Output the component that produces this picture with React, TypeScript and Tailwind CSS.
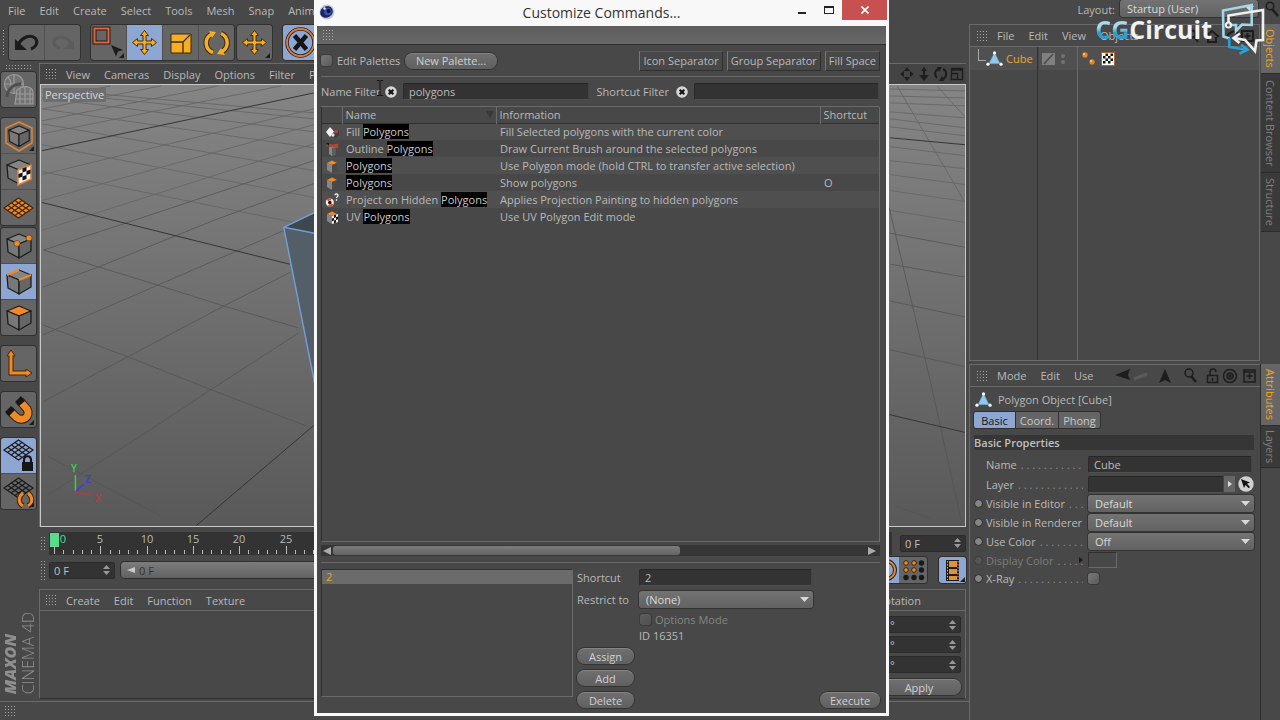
import React from "react";

type Kids = { children?: React.ReactNode; className?: string };

const dots =
  "bg-[radial-gradient(circle,#a8a8a8_0.8px,transparent_1px)] bg-[size:3px_3px]";

function Grip({ className = "w-3 h-3" }: { className?: string }) {
  return <span aria-hidden="true" className={`${dots} shrink-0 ${className}`} />;
}

function MenuItem({ children }: Kids) {
  return (
    <button type="button" className="whitespace-nowrap text-[#b9b9b9]">
      {children}
    </button>
  );
}

function ToolButton({
  label,
  active,
  children,
}: {
  label: string;
  active?: boolean;
  children?: React.ReactNode;
}) {
  return (
    <button
      type="button"
      aria-label={label}
      className={`size-[35px] shrink-0 ${active ? "bg-[#8ea6d2]" : "bg-[#656565]"}`}
    >
      <svg viewBox="0 0 35 35" className="size-full" fill="none">
        {children}
      </svg>
    </button>
  );
}

function ToolGroup({ children, vertical }: { children: React.ReactNode; vertical?: boolean }) {
  return (
    <div
      className={`flex shrink-0 overflow-hidden rounded-[3px] bg-[#505050] ring-1 ring-[#303030] gap-px ${
        vertical ? "flex-col" : ""
      }`}
    >
      {children}
    </div>
  );
}

const Corner = () => <path d="M33 28v5h-5z" fill="#1c1c1c" />;

const MoveShape = () => (
  <path
    d="M17.500 5.500l4 5h-2.500v5.500h5.500v-2.500l5 4-5 4v-2.500H19v5.500h2.500l-4 5-4-5H16v-5.500h-5.500v2.500l-5-4 5-4v2.500H16v-5.500h-2.500z"
    fill="#f5ae25"
    stroke="#403010"
    strokeWidth="1"
  />
);

function Cube({ top = "#858585", right = "#666", front = "#787878", edge = "#1d1d1d" }) {
  return (
    <g stroke={edge} strokeWidth="1.300" strokeLinejoin="round">
      <path d="M6 11l12-5 12 5-12 5z" fill={top} />
      <path d="M6 11l12 5v14L7 24z" fill={front} />
      <path d="M30 11l-12 5v14l12-7z" fill={right} />
    </g>
  );
}

function Lattice({ fill = "none", stroke = "#1a1a1a", dy = 0 }) {
  return (
    <g stroke={stroke} strokeWidth="1.200" transform={`translate(0 ${dy})`}>
      <path d="M17.500 2L32 12 17.500 22 3 12z" fill={fill} />
      <path d="M14 4.500L28.500 14.500M10.500 7L25 17M7 9.500L21 19.500M21 4.500L6.500 14.500M24.500 7L10 17M28.500 9.500L14 19.500" />
    </g>
  );
}

function Viewport() {
  return (
    <svg
      viewBox="40 84 925 443"
      preserveAspectRatio="none"
      className="block size-full"
      fill="none"
      role="img"
      aria-label="Perspective viewport"
    >
      <defs>
        <linearGradient id="floor" x1="0" y1="0" x2="0" y2="1">
          <stop offset="0" stopColor="#858585" />
          <stop offset="1" stopColor="#595959" />
        </linearGradient>
      </defs>
      <rect x="40" y="84" width="925" height="443" fill="url(#floor)" />
      <g stroke="#656565" strokeOpacity=".85">
        <path d="M41 88L313 112M41 91L313 118M41 97L313 131M41 108L313 147M41 123L313 170M41 144L313 197M41 171L313 226" />
        <path d="M41 98L110 85M41 108L160 85M41 120L217 85M41 133L280 85M41 174L313 108M41 200L313 124M41 230L313 143" />
        <path d="M890 88L965 90M890 95L965 97M890 102L965 105M890 111L965 117M890 118L965 127M890 126L965 135M890 146L965 155M890 160L965 168M890 174L965 184M890 190L965 201M890 210L965 222" />
        <path d="M897 85L965 202M937 85L965 116" />
      </g>
      <g stroke="#545454" strokeOpacity=".8">
        <path d="M43 250L157 285 223 306 298 328M42 325L127 357 210 390 307 427M47 457L90 480 160 517" />
        <path d="M42 250L133 220 313 160M42 287L97 267 213 220 313 183M42 335L157 285 233 252 313 217M42 402L127 357 223 306 290 272M48 495L147 432 210 390 298 333" />
        <path d="M890 233L965 247M890 264L965 277M890 301L965 317M890 350L965 367M889 207L930 380 962 525M895 507L930 519" />
      </g>
      <g stroke="#353535">
        <path d="M41 150L313 92M41 202L289 264M195 527L313 426M890 137L965 144M889 415L965 433" />
      </g>
      <path d="M283 227L314 213V233z" fill="#3e464e" />
      <path d="M283 227L314 233V384z" fill="#535e68" />
      <path d="M314 212L283 227 314 384M283 227L314 233" stroke="#6f9dd4" strokeWidth="1.500" />
      <path d="M74.500 492V476" stroke="#3ecf4a" strokeWidth="1.500" />
      <path d="M75 492l8-7" stroke="#3c3ce0" strokeWidth="1.500" />
      <path d="M75 493l15 3" stroke="#b53c3c" strokeWidth="1.500" />
      <g fontFamily="Open Sans" fontSize="10" fontWeight="600">
        <text x="70" y="473" fill="#3ecf4a">Y</text>
        <text x="84" y="484" fill="#3c3ce0">Z</text>
        <text x="94" y="503" fill="#b53c3c">X</text>
      </g>
    </svg>
  );
}

function Ruler() {
  const ticks = Array.from({ length: 90 }, (_, i) => i);
  return (
    <svg className="h-[23px] min-w-0 flex-1 bg-[#333]" role="img" aria-label="Timeline ruler">
      <rect x="1" y="1" width="9" height="14" fill="#58dc8c" />
      {ticks.map((i) => {
        const x = Math.round(5 + i * 9.26);
        return (
          <g key={i}>
            <rect x={x} y={i % 5 ? 18 : 14} width="1" height={i % 5 ? 4 : 8} fill="#bdbdbd" />
            {i % 5 === 0 && (
              <text
                x={i === 0 ? 14 : x}
                y="11"
                textAnchor="middle"
                fontSize="11"
                fill={i === 0 ? "#58dc8c" : "#b9b9b9"}
              >
                {i}
              </text>
            )}
          </g>
        );
      })}
    </svg>
  );
}

const Spin = () => (
  <svg viewBox="0 0 7 10" className="h-[10px] w-[7px] shrink-0" fill="#999" aria-hidden="true">
    <path d="M3.500 0L7 4H0zM3.500 10L0 6h7z" />
  </svg>
);

function NumberBox({ label, value, className = "" }: { label: string; value: string; className?: string }) {
  return (
    <label
      className={`flex h-[17px] items-center rounded-[2px] border border-[#2b2b2b] bg-[#333] px-1 ${className}`}
    >
      <span className="sr-only">{label}</span>
      <input defaultValue={value} className="w-full min-w-0 bg-transparent text-[#c0c0c0] outline-none" />
      <Spin />
    </label>
  );
}

function Select({
  id,
  value,
  label,
  className = "",
}: {
  id: string;
  value: string;
  label?: string;
  className?: string;
}) {
  return (
    <div className={`grid items-center ${className}`}>
      <select
        id={id}
        aria-label={label}
        className="col-start-1 row-start-1 h-[17px] w-full appearance-none rounded-[3px] bg-linear-to-b from-[#737373] to-[#626262] px-[7px] text-[#dadada] shadow-[0_0_0_1px_#333] outline-none"
      >
        <option>{value}</option>
      </select>
      <svg
        viewBox="0 0 9 5"
        className="pointer-events-none col-start-1 row-start-1 mr-1 h-[5px] w-[9px] justify-self-end"
        fill="#d8d8d8"
        aria-hidden="true"
      >
        <path d="M0 0h9L4.500 5z" />
      </svg>
    </div>
  );
}

function Check({ id, disabled }: { id: string; disabled?: boolean }) {
  return (
    <input
      id={id}
      type="checkbox"
      disabled={disabled}
      className="size-[11px] shrink-0 appearance-none rounded-[3px] bg-linear-to-br from-[#7a7a7a] to-[#5a5a5a] shadow-[0_0_0_1px_#3a3a3a] disabled:from-[#5e5e5e] disabled:to-[#505050]"
    />
  );
}

function Pill({ children, className = "" }: Kids) {
  return (
    <button
      type="button"
      className={`h-[16px] rounded-full border-t border-[#858585] bg-linear-to-b from-[#6f6f6f] to-[#606060] leading-[14px] text-[#d0d0d0] shadow-[0_0_0_1px_#333] ${className}`}
    >
      {children}
    </button>
  );
}

function Clear({ label }: { label: string }) {
  return (
    <button type="button" aria-label={label} className="size-[12px] shrink-0">
      <svg viewBox="0 0 12 12" className="size-full">
        <circle cx="6" cy="6" r="5.800" fill="#d6d6d6" />
        <path d="M3.700 3.700l4.600 4.600M8.300 3.700L3.700 8.300" stroke="#151515" strokeWidth="2.200" />
      </svg>
    </button>
  );
}

function SideTab({ children, active, className }: Kids & { active?: boolean }) {
  return (
    <button
      type="button"
      className={`flex w-full items-center justify-center border-b border-[#2c2c2c] text-[11px] whitespace-nowrap [writing-mode:vertical-rl] ${
        active ? "bg-[#666] text-[#f0a422]" : "bg-[#3a3a3a] text-[#808080]"
      } ${className}`}
    >
      {children}
    </button>
  );
}

const Tri = () => (
  <svg viewBox="0 0 18 16" className="h-[15px] w-[17px] shrink-0" aria-hidden="true">
    <path d="M9 1.500l6 12H3z" fill="#8fc8ee" stroke="#5f94bb" strokeWidth=".6" />
    <g fill="#fff">
      <circle cx="9" cy="2" r="1.700" />
      <circle cx="2" cy="14" r="1.700" />
      <circle cx="16" cy="14" r="1.700" />
    </g>
  </svg>
);

function RowIcon({ kind }: { kind: string }) {
  return (
    <svg viewBox="0 0 14 14" className="mx-auto size-[14px]" aria-hidden="true">
      {kind === "fill" && (
        <>
          <path d="M7 6l4-2 3 2v4l-4 3-3-2z" fill="#3b3b3b" />
          <circle cx="11" cy="6.500" r="2" fill="#b2472f" />
          <path d="M1 7l4-5 4 4.500L5 12z" fill="#f2f2f2" />
          <circle cx="8" cy="10" r="1.700" fill="#ddd" />
        </>
      )}
      {kind === "outline" && (
        <>
          <path d="M4 5h7v7l-4 2-3-2z" fill="#888" />
          <path d="M7 6v8l4-2V5z" fill="#5c5c5c" />
          <path d="M2 2.500l5 1.500 5-1v3" stroke="#b2472f" strokeWidth="2.400" fill="none" />
          <path d="M1 1h3v3z" fill="#161616" />
        </>
      )}
      {(kind === "poly" || kind === "uv") && (
        <>
          <path d="M2 4l5-2.500L12 4 7 6z" fill="#f08a27" />
          <path d="M2 4l5 2v8l-5-3z" fill="#868686" />
          <path d="M12 4L7 6v8l5-3z" fill="#4a4a4a" />
        </>
      )}
      {kind === "uv" && (
        <>
          <path d="M7 6l6-2v8l-6 2z" fill="#eee" />
          <path d="M9 5.300l2-.6v2.600l-2 .7zM7 8.600l2-.6v2.600l-2 .7zM11 7.300l2-.7v2.700l-2 .7zM9 10.600l2-.6v2.600l-2 .7z" fill="#111" />
        </>
      )}
      {kind === "project" && (
        <>
          <circle cx="4.800" cy="9.500" r="2.900" fill="#161616" stroke="#f1f1f1" strokeWidth="2.200" />
          <path d="M2.500 7.500A3 3 0 0 1 6 6.800M7.500 11a3 3 0 0 1-4 1" stroke="#d0532d" strokeWidth="2.200" fill="none" />
          <path d="M10 2.200c.2-1.800 3.200-1.600 3 .3-.2 1.200-1.500 1.200-1.500 2.500M11.500 6.200v1.500" stroke="#fff" strokeWidth="1.300" fill="none" />
        </>
      )}
    </svg>
  );
}

const commands = [
  { icon: "fill", pre: "Fill ", info: "Fill Selected polygons with the current color", key: "" },
  { icon: "outline", pre: "Outline ", info: "Draw Current Brush around the selected polygons", key: "" },
  { icon: "poly", pre: "", info: "Use Polygon mode (hold CTRL to transfer active selection)", key: "" },
  { icon: "poly", pre: "", info: "Show polygons", key: "O" },
  { icon: "project", pre: "Project on Hidden ", info: "Applies Projection Painting to hidden polygons", key: "" },
  { icon: "uv", pre: "UV ", info: "Use UV Polygon Edit mode", key: "" },
];

const field =
  "h-[17px] min-w-0 rounded-[2px] border border-t-[#262626] border-l-[#2b2b2b] border-r-[#444] border-b-[#505050] bg-[#333] px-[5px] text-[#bcbcbc] outline-none";

function CommandDialog() {
  return (
    <section
      role="dialog"
      aria-labelledby="dialog-title"
      className="absolute top-0 left-[314px] flex h-[716px] w-[575px] flex-col bg-[#f8f8f8] px-[3px] pb-[3px]"
    >
      <header className="-mr-px flex h-[26px] shrink-0 items-start text-[#333]">
        <svg viewBox="0 0 16 16" className="mt-1 ml-[2px] size-[16px]" aria-hidden="true">
          <circle cx="8" cy="8" r="7.500" fill="#c3c7d4" />
          <ellipse cx="7.500" cy="8" rx="6.500" ry="5.600" fill="#1b2560" transform="rotate(-30 7.500 8)" />
          <circle cx="8.800" cy="7.500" r="3.800" fill="#3d4fae" />
          <circle cx="9.500" cy="7" r="2" fill="#0b1030" />
          <circle cx="5.500" cy="4.500" r="1.300" fill="#dfe4f7" />
        </svg>
        <h1 id="dialog-title" className="flex-1 pl-[80px] text-center text-[14px] leading-[26px]">
          Customize Commands...
        </h1>
        <button type="button" aria-label="Minimize" className="flex h-[20px] w-[27px] justify-center pt-3">
          <span className="h-[2px] w-2 bg-[#222]" />
        </button>
        <button type="button" aria-label="Maximize" className="flex h-[20px] w-[27px] justify-center pt-[6px]">
          <span className="h-[8px] w-[10px] border border-t-2 border-[#222]" />
        </button>
        <button type="button" aria-label="Close" className="flex h-[20px] w-[45px] items-center justify-center bg-[#c75050]">
          <svg viewBox="0 0 8 8" className="size-2" stroke="#fff" strokeWidth="1.600">
            <path d="M.5.500l7 7M7.500.500l-7 7" />
          </svg>
        </button>
      </header>

      <div className="flex min-h-0 flex-1 flex-col bg-[#484848] text-[#b9b9b9]">
        <div className="flex h-[19px] shrink-0 items-center border-b border-[#2e2e2e] bg-linear-to-b from-[#5c5c5c] to-[#686868] pl-[5px]">
          <Grip />
        </div>

        <div className="mr-[6px] ml-1 flex h-[32px] shrink-0 items-center border-b border-[#6a6a6a]">
          <Check id="edit-palettes" />
          <label htmlFor="edit-palettes" className="ml-[5px] w-[64px] whitespace-nowrap">
            Edit Palettes
          </label>
          <Pill className="ml-1 w-[92px]">New Palette...</Pill>
          <div className="ml-auto flex gap-1">
            {["Icon Separator", "Group Separator", "Fill Space"].map((t) => (
              <button
                key={t}
                type="button"
                className="h-5 border border-t-[#5e5e5e] border-r-[#303030] border-b-[#303030] border-l-[#777] px-[3px] leading-[18px] whitespace-nowrap"
              >
                {t}
              </button>
            ))}
          </div>
        </div>

        <div className="mr-[7px] ml-1 flex h-[30px] shrink-0 items-center border-b border-[#6a6a6a]">
          <label htmlFor="name-filter" className="w-[64px] whitespace-nowrap">
            Name Filter
          </label>
          <Clear label="Clear name filter" />
          <input id="name-filter" defaultValue="polygons" className={`${field} ml-[6px] flex-1`} />
          <label htmlFor="shortcut-filter" className="ml-2 w-[79px] whitespace-nowrap">
            Shortcut Filter
          </label>
          <Clear label="Clear shortcut filter" />
          <input id="shortcut-filter" className={`${field} ml-[6px] flex-1`} />
        </div>

        <div className="mr-[6px] ml-1 min-h-0 flex-1 border-r border-b border-l border-r-[#6a6a6a] border-b-[#6a6a6a] border-l-[#303030]">
          <table className="w-full table-fixed border-collapse text-left">
            <colgroup>
              <col className="w-[20px]" />
              <col className="w-[154px]" />
              <col />
              <col className="w-[59px]" />
            </colgroup>
            <thead>
              <tr className="h-[16px] border-b border-[#303030]">
                <th aria-label="Icon" className="p-0" />
                <th className="border-l border-[#6a6a6a] p-0 pl-[3px] font-normal">
                  <span className="flex items-center justify-between">
                    Name
                    <svg viewBox="0 0 8 7" className="mr-[2px] h-[7px] w-2" fill="#383838" aria-hidden="true">
                      <path d="M0 0h8L4 7z" />
                    </svg>
                  </span>
                </th>
                <th className="border-l border-[#6a6a6a] p-0 pl-[3px] font-normal">Information</th>
                <th className="border-l border-[#6a6a6a] p-0 pl-[3px] font-normal">Shortcut</th>
              </tr>
            </thead>
            <tbody>
              {commands.map((c, i) => (
                <tr key={i} className="h-[17px] odd:bg-[#4f4f4f]">
                  <td className="p-0">
                    <RowIcon kind={c.icon} />
                  </td>
                  <td className="p-0 pl-1 whitespace-nowrap">
                    {c.pre}
                    <mark className="bg-black text-[#c8c8c8]">Polygons</mark>
                  </td>
                  <td className="p-0 pl-1 whitespace-nowrap">{c.info}</td>
                  <td className="p-0 pl-1">{c.key}</td>
                </tr>
              ))}
            </tbody>
          </table>
        </div>

        <div className="mr-[6px] ml-1 flex h-[21px] shrink-0 items-start border-b border-[#6a6a6a] pt-[3px]">
          <div className="flex h-[11px] w-full items-center bg-[#363636]">
            <svg viewBox="0 0 8 8" className="mx-[2px] size-2" fill="#aaa" aria-hidden="true">
              <path d="M8 0v8L0 4z" />
            </svg>
            <div className="h-[9px] w-[62%] rounded-[3px] bg-linear-to-b from-[#7c7c7c] to-[#646464]" />
            <svg viewBox="0 0 8 8" className="mr-1 ml-auto size-2" fill="#aaa" aria-hidden="true">
              <path d="M0 0v8l8-4z" />
            </svg>
          </div>
        </div>

        <div className="mr-[6px] mb-3 ml-1 flex h-[138px] shrink-0 pt-[6px]">
          <ul className="mb-1 w-[252px] border border-t-[#303030] border-r-[#6a6a6a] border-b-[#6a6a6a] border-l-[#303030]">
            <li className="h-[14px] bg-[#6b6b6b] px-1 leading-[13px] text-[#f0a422]">2</li>
          </ul>
          <div className="ml-1 flex flex-1 flex-col">
            <div className="flex h-[17px] items-center">
              <label htmlFor="shortcut" className="w-[62px]">
                Shortcut
              </label>
              <input id="shortcut" defaultValue="2" className={`${field} w-[173px]`} />
            </div>
            <div className="mt-[5px] flex h-[17px] items-center">
              <label htmlFor="restrict" className="w-[62px] whitespace-nowrap">
                Restrict to
              </label>
              <Select id="restrict" value="(None)" className="w-[174px]" />
            </div>
            <div className="mt-1 ml-[63px] flex h-[16px] items-center gap-1 text-[#858585]">
              <Check id="options-mode" disabled />
              <label htmlFor="options-mode">Options Mode</label>
            </div>
            <p className="ml-[62px] leading-[18px]">ID 16351</p>
            <div className="mt-[3px] flex items-end justify-between">
              <div className="flex flex-col gap-[6px]">
                <Pill className="w-[57px]">Assign</Pill>
                <Pill className="w-[57px]">Add</Pill>
                <Pill className="w-[57px]">Delete</Pill>
              </div>
              <Pill className="w-[60px]">Execute</Pill>
            </div>
          </div>
        </div>
      </div>

      <svg viewBox="0 0 8 16" className="pointer-events-none absolute top-[80px] left-[62px] h-[16px] w-2" stroke="#111" fill="none" aria-hidden="true">
        <path d="M1 .5h2.500M4.500.500H7M4 1v14M1 15.500h2.500M4.500 15.500H7" />
      </svg>
    </section>
  );
}

function TopTools() {
  return (
    <div className="flex h-[40px] shrink-0 items-center pl-[2px]">
      <Grip className="mr-[3px] h-[27px] w-[4px]" />
      <ToolGroup>
        <ToolButton label="Undo">
          <path d="M9 20c4-8 12-11 17-7 4 4 1 9-4 11" stroke="#1b1b1b" strokeWidth="3" />
          <path d="M6 14v11h12z" fill="#1b1b1b" />
        </ToolButton>
        <ToolButton label="Redo">
          <path d="M27 20c-4-8-12-10-17-6-3 4 0 8 5 9" stroke="#5c5c5c" strokeWidth="3" />
          <path d="M29 15v9H19z" fill="#5c5c5c" />
        </ToolButton>
      </ToolGroup>
      <span className="w-[11px] shrink-0" />
      <ToolGroup>
        <ToolButton label="Select">
          <path d="M3.500 3.500h14v14h-14z" stroke="#2e1712" strokeWidth="4" />
          <path d="M3.500 3.500h14v14h-14z" stroke="#dc6743" strokeWidth="2" />
          <path d="M20 20l12 5-5 1.500-2 5z" fill="#1c1c1c" />
          <Corner />
        </ToolButton>
        <ToolButton label="Move" active>
          <MoveShape />
        </ToolButton>
        <ToolButton label="Scale">
          <path d="M8 9h20v19H8z" fill="#f5ae25" stroke="#3a2c10" />
          <path d="M8 17h12v11M20 17l7-7" stroke="#3a2c10" strokeWidth="1.300" />
        </ToolButton>
        <ToolButton label="Rotate">
          <path d="M14 27.500A10 10 0 0 1 12 9.500M22 8.500a10 10 0 0 1 1 18" stroke="#3a2c10" strokeWidth="5.500" />
          <path d="M14 27.500A10 10 0 0 1 12 9.500M22 8.500a10 10 0 0 1 1 18" stroke="#f5ae25" strokeWidth="3.500" />
          <path d="M10 6l7 1-4 6zM26 30l-8-1 4-6z" fill="#f5ae25" />
        </ToolButton>
      </ToolGroup>
      <span className="w-[3px] shrink-0" />
      <ToolGroup>
        <ToolButton label="Last tool">
          <MoveShape />
          <Corner />
        </ToolButton>
      </ToolGroup>
      <span className="w-[11px] shrink-0" />
      <ToolGroup>
        <ToolButton label="X axis" active>
          <circle cx="17.500" cy="17.500" r="13.500" stroke="#262626" strokeWidth="3.500" />
          <circle cx="17.500" cy="17.500" r="13.500" stroke="#df7b3a" strokeWidth="1.800" />
          <path d="M11.500 10.500l12 14M23.500 10.500l-12 14" stroke="#161616" strokeWidth="4.500" />
        </ToolButton>
      </ToolGroup>
    </div>
  );
}

function LeftTools() {
  return (
    <aside className="flex w-[39px] shrink-0 flex-col pr-[3px] pl-px">
      <Grip className="mt-[1px] ml-1 h-[6px] w-[27px]" />
      <div className="mt-[2px] flex flex-col gap-[11px]">
        <ToolGroup vertical>
          <ToolButton label="Make editable">
            <g stroke="#9b9b9b" strokeWidth="1.200" fill="#737373">
              <circle cx="13" cy="12" r="9.500" />
              <path d="M4 12h18M13 3v18M7 5c4 4 4 10 0 14" />
              <path d="M16 18c8-6 15-3 16 2v12H14z" />
              <path d="M19 17v15M24 15v17M29 17v15M15 22h17M15 27h17" />
            </g>
            <path d="M6 25c1-9 7-13 14-13" stroke="#4f4f4f" strokeWidth="3" />
          </ToolButton>
        </ToolGroup>
        <div className="flex flex-col gap-[3px]">
          <ToolGroup vertical>
            <ToolButton label="Model mode">
              <path d="M18 4l13 6v15l-13 8L5 25V10z" stroke="#e88331" strokeWidth="1.500" />
              <g transform="translate(2.700 3) scale(.85)">
                <Cube />
              </g>
              <Corner />
            </ToolButton>
            <ToolButton label="Texture mode">
              <Cube />
              <path d="M17 16l13-5v14l-13 6z" fill="#f2f2f2" stroke="#e88331" strokeWidth="1.600" />
              <path d="M21.500 14.500l4-1.500v4l-4 1.500zM17.500 20l4-1.500v4l-4 1.500zM25.500 17l4-1.500v4l-4 1.500zM21.500 22.500l4-1.500v4l-4 1.500z" fill="#111" />
            </ToolButton>
            <ToolButton label="Workplane">
              <Lattice fill="#ee8a28" stroke="#402409" dy={6} />
            </ToolButton>
          </ToolGroup>
          <ToolGroup vertical>
            <ToolButton label="Points mode">
              <Cube />
              <circle cx="16" cy="15.500" r="3" fill="#f08a27" stroke="#5a3410" strokeWidth=".6" />
              <circle cx="28" cy="10" r="3" fill="#f08a27" stroke="#5a3410" strokeWidth=".6" />
            </ToolButton>
            <ToolButton label="Edges mode" active>
              <Cube />
              <path d="M6 11l12-5M18 16l12-5" stroke="#f08a27" strokeWidth="2.200" />
            </ToolButton>
            <ToolButton label="Polygons mode">
              <Cube top="#f08a27" />
            </ToolButton>
          </ToolGroup>
        </div>
        <ToolGroup vertical>
          <ToolButton label="Axis">
            <path d="M10 9v18h17" stroke="#442708" strokeWidth="5" />
            <path d="M10 4l4 6H6zM31 27l-6 4v-8z" fill="#f08a27" stroke="#442708" />
            <path d="M10 9v18h17" stroke="#f08a27" strokeWidth="3" />
          </ToolButton>
        </ToolGroup>
        <ToolGroup vertical>
          <ToolButton label="Snap">
            <path d="M8 18l7 7c7 6 15-1 11-8l-7-8" stroke="#352009" strokeWidth="9" />
            <path d="M8 18l7 7c7 6 15-1 11-8l-7-8" stroke="#f08a27" strokeWidth="7" />
            <path d="M4 20l6-6 4 4-6 6zM14 10l6-6 4 5-6 5z" fill="#161616" />
            <Corner />
          </ToolButton>
        </ToolGroup>
        <ToolGroup vertical>
          <ToolButton label="Lock workplane" active>
            <Lattice />
            <path d="M23 25v-3c0-5 7-5 7 0v3" stroke="#151515" strokeWidth="2.200" />
            <path d="M21 24h11v9H21z" fill="#151515" />
          </ToolButton>
          <ToolButton label="Planar workplane">
            <Lattice dy={2} />
            <path d="M22 19c-5 4-5 10 0 13M27 19c5 4 5 10 0 13" stroke="#3b220a" strokeWidth="5" />
            <path d="M22 19c-5 4-5 10 0 13M27 19c5 4 5 10 0 13" stroke="#f08a27" strokeWidth="3" />
            <Corner />
          </ToolButton>
        </ToolGroup>
      </div>
      <div className="mt-auto mb-[5px] flex rotate-180 flex-col self-center text-[#8f8f8f] [writing-mode:vertical-rl]">
        <b className="text-[16px] leading-[18px] font-extrabold italic">MAXON</b>
        <span className="text-[16px] leading-[18px] font-light whitespace-nowrap">CINEMA 4D</span>
      </div>
    </aside>
  );
}

function Workspace() {
  return (
    <div className="flex min-w-0 flex-1 flex-col pr-[3px]">
      <div className="flex min-h-0 flex-1 flex-col border-t border-l border-[#6a6a6a]">
        <div className="flex h-[20px] shrink-0 items-center bg-[#444] pr-[2px] pl-[5px]">
          <Grip />
          <nav className="ml-[9px] flex gap-[14px]">
            {["View", "Cameras", "Display", "Options", "Filter", "Panel"].map((t) => (
              <MenuItem key={t}>{t}</MenuItem>
            ))}
          </nav>
          <svg viewBox="0 0 64 14" className="ml-auto h-[14px] w-[64px]" fill="#1e1e1e" aria-hidden="true">
            <path d="M7 0l3 4H4zM7 14l3-4H4zM0 7l4-3v6zM14 7l-4-3v6z" />
            <path d="M24 0l3 4h-2v4h4l-5 6-5-6h4V4h-2z" />
            <path d="M38 2a5.500 5.500 0 0 0-1 9M43 2a5.500 5.500 0 0 1 0 10" stroke="#1e1e1e" strokeWidth="2" fill="none" />
            <path d="M37 0h5l-3 5zM44 14h-5l3-5z" />
            <path d="M51.500 1.500h11v11h-11zM51.500 6.500h6v6M51.500 3h11" stroke="#1e1e1e" strokeWidth="1.300" fill="none" />
          </svg>
        </div>
        <div className="relative min-h-0 flex-1 border border-[#c8c8c8]">
          <Viewport />
          <span className="absolute top-[3px] left-[2px] bg-[#6e6e6e] px-[2px] leading-[14px] text-[#d6d6d6]">
            Perspective
          </span>
        </div>
      </div>

      <div className="flex h-[32px] shrink-0 items-center pl-px">
        <Grip className="mr-[4px] h-[15px] w-[5px]" />
        <Ruler />
        <NumberBox label="Current frame" value="0 F" className="ml-2 w-[66px]" />
      </div>

      <div className="flex h-[22px] shrink-0 items-center pl-px">
        <Grip className="mr-[4px] h-[21px] w-[5px]" />
        <NumberBox label="Start frame" value="0 F" className="w-[66px]" />
        <div className="ml-[6px] flex h-[16px] w-[700px] items-center gap-1 rounded-[4px] bg-linear-to-b from-[#7c7c7c] to-[#626262] pl-[6px] text-[#333] ring-1 ring-[#2e2e2e]">
          <svg viewBox="0 0 8 6" className="h-[6px] w-2" fill="#c8c8c8" aria-hidden="true">
            <path d="M8 0v6L0 3z" />
          </svg>
          0 F
        </div>
        <div className="ml-auto flex gap-3">
          <div className="flex h-[26px] overflow-hidden rounded-[3px] ring-1 ring-[#303030]">
            <button type="button" aria-label="Record parameter" className="w-[26px] bg-[#8ea6d2]">
              <svg viewBox="0 0 26 26" className="size-full" fill="none">
                <circle cx="13" cy="13" r="9" stroke="#262626" strokeWidth="4" />
                <circle cx="13" cy="13" r="9" stroke="#df8b3a" strokeWidth="2" />
              </svg>
            </button>
            <button type="button" aria-label="Record points" className="w-[28px] bg-[#656565]">
              <svg viewBox="0 0 28 26" className="size-full" fill="#191919">
                <g fill="#f08a27" stroke="#3b220a">
                  <circle cx="7" cy="6" r="2.300" />
                  <circle cx="15" cy="6" r="2.300" />
                  <circle cx="7" cy="13" r="2.300" />
                  <circle cx="15" cy="13" r="2.300" />
                </g>
                <circle cx="22.500" cy="6" r="2.700" />
                <circle cx="22.500" cy="13" r="2.700" />
                <circle cx="7" cy="20.500" r="2.700" />
                <circle cx="15" cy="20.500" r="2.700" />
                <circle cx="22.500" cy="20.500" r="2.700" />
              </svg>
            </button>
          </div>
          <button type="button" aria-label="Film" className="h-[26px] w-[27px] rounded-[3px] bg-[#8ea6d2] ring-1 ring-[#303030]">
            <svg viewBox="0 0 27 26" className="size-full">
              <path d="M7 3h13v21H7z" fill="#1b1b1b" />
              <path d="M10 4h8v6h-8zM10 12h8v5h-8zM10 19h8v4h-8z" fill="#e0913c" />
              <path d="M8.500 4v19M19 4v19" stroke="#b9b9b9" strokeDasharray="1.500 1.500" />
              <path d="M26 20v5h-5z" fill="#1c1c1c" />
            </svg>
          </button>
        </div>
      </div>

      <div className="mt-[8px] flex h-[110px] shrink-0 gap-1">
        <div className="flex min-w-0 flex-1 flex-col border-t border-b border-l border-t-[#6a6a6a] border-b-[#2e2e2e] border-l-[#6a6a6a]">
          <div className="flex h-[21px] items-center border-b border-[#6a6a6a] pl-[5px]">
            <Grip />
            <nav className="ml-[9px] flex gap-[14px]">
              {["Create", "Edit", "Function", "Texture"].map((t) => (
                <MenuItem key={t}>{t}</MenuItem>
              ))}
            </nav>
          </div>
        </div>
        <div className="flex w-[180px] flex-col border-t border-r border-b border-[#6a6a6a] border-b-[#2e2e2e]">
          <div className="flex h-[21px] items-center justify-end border-b border-[#6a6a6a] pr-[44px]">Rotation</div>
          <div className="mt-[5px] flex flex-col items-end gap-[3px] pr-1">
            {["H", "P", "B"].map((a) => (
              <NumberBox key={a} label={`Rotation ${a}`} value="°" className="w-[76px]" />
            ))}
            <Pill className="mt-[3px] w-[84px]">Apply</Pill>
          </div>
        </div>
      </div>
    </div>
  );
}

function ObjectsPanel() {
  return (
    <div className="flex h-[337px] shrink-0">
      <div className="flex min-w-0 flex-1 flex-col border border-[#6a6a6a]">
        <div className="flex h-[22px] shrink-0 items-center border-b border-[#6a6a6a] pr-1 pl-[6px]">
          <Grip />
          <nav className="ml-[9px] flex gap-[14px]">
            {["File", "Edit", "View", "Objects"].map((t) => (
              <MenuItem key={t}>{t}</MenuItem>
            ))}
          </nav>
          <svg viewBox="0 0 68 14" className="ml-auto h-[14px] w-[68px]" fill="none" stroke="#1d1d1d" strokeWidth="2" aria-hidden="true">
            <circle cx="5" cy="5" r="3.500" />
            <path d="M7 8l4 5M18 8l7-6 7 6M21 8v5h8V8M40 7c5-6 9-6 13 0M55 2h11v10H55zM60.500 4v6M57.500 7h6" />
          </svg>
        </div>
        <div className="flex min-h-0 flex-1">
          <div className="w-[68px] shrink-0 border-r border-[#303030]">
            <div className="flex h-[23px] items-center bg-[#505050] pl-2 text-[#f0a422]">
              <span className="mb-[8px] h-3 w-2 shrink-0 border-b border-l border-[#a8a8a8]" />
              <Tri />
              <span className="ml-[3px]">Cube</span>
            </div>
          </div>
          <div className="w-px shrink-0" />
          <div className="w-[39px] shrink-0 border-r border-[#6a6a6a]">
            <div className="flex h-[23px] items-center bg-[#505050] pl-[3px]">
              <svg viewBox="0 0 26 14" className="h-[14px] w-[26px]" aria-hidden="true">
                <rect x="0" y="1" width="13" height="12" fill="#808080" />
                <path d="M2 12L11 2" stroke="#4a4a4a" strokeWidth="1.500" />
                <circle cx="21" cy="4" r="2" fill="#727272" />
                <circle cx="21" cy="10" r="2" fill="#727272" />
              </svg>
            </div>
          </div>
          <div className="flex-1">
            <div className="flex h-[23px] items-center gap-[5px] bg-[#505050] pl-[3px]">
              <svg viewBox="0 0 15 15" className="size-[15px]" aria-hidden="true">
                <g fill="#d58a3e" stroke="#5d3a15" strokeWidth=".7">
                  <circle cx="4" cy="4" r="3.200" />
                  <circle cx="11" cy="11" r="3.200" />
                </g>
                <circle cx="3" cy="3" r="1" fill="#f5cf98" />
                <circle cx="10" cy="10" r="1" fill="#f5cf98" />
              </svg>
              <svg viewBox="0 0 14 14" className="size-[14px]" aria-hidden="true">
                <rect x=".5" y=".5" width="13" height="13" fill="#fff" stroke="#b7652c" />
                <path d="M4.500 1.500h2.500v2.500H4.500zM9.500 1.500h2.500v2.500H9.500zM2 4h2.500v2.500H2zM7 4h2.500v2.500H7zM4.500 6.500h2.500V9H4.500zM9.500 6.500h2.500V9H9.500zM2 9h2.500v2.500H2zM7 9h2.500v2.500H7z" fill="#111" />
              </svg>
            </div>
          </div>
        </div>
      </div>
      <div className="flex w-[20px] shrink-0 flex-col pl-px">
        <SideTab active className="h-[50px]">Objects</SideTab>
        <SideTab className="h-[99px]">Content Browser</SideTab>
        <SideTab className="h-[59px]">Structure</SideTab>
      </div>
    </div>
  );
}

function AttrRow({
  label,
  id,
  dot = true,
  dim,
  leader = true,
  height = "h-[19px]",
  children,
}: {
  label: string;
  id: string;
  dot?: boolean;
  dim?: boolean;
  leader?: boolean;
  height?: string;
  children: React.ReactNode;
}) {
  return (
    <div className={`flex items-center ${height} ${dim ? "text-[#7c7c7c]" : ""}`}>
      <span
        className={`mr-[3px] size-[9px] shrink-0 rounded-full ${
          dot ? (dim ? "border border-[#3a3a3a] bg-[#555]" : "border border-[#2a2a2a] bg-[#858585]") : ""
        }`}
      />
      <span className="mr-[5px] flex w-[97px] shrink-0 overflow-hidden whitespace-nowrap">
        <label htmlFor={id}>{label}</label>
        {leader && (
          <span aria-hidden="true" className="ml-1 flex-1 overflow-hidden text-[#8c8c8c]">
            . . . . . . . . . . . . . . . .
          </span>
        )}
      </span>
      {children}
    </div>
  );
}

function AttributesPanel() {
  return (
    <div className="mt-[3px] flex min-h-0 flex-1">
      <div className="flex min-w-0 flex-1 flex-col border-t border-l border-[#6a6a6a]">
        <div className="flex h-[22px] shrink-0 items-center border-b border-[#6a6a6a] pr-1 pl-[6px]">
          <Grip />
          <nav className="ml-[9px] flex gap-[14px]">
            {["Mode", "Edit", "Use"].map((t) => (
              <MenuItem key={t}>{t}</MenuItem>
            ))}
          </nav>
          <svg viewBox="0 0 142 16" className="ml-auto h-[16px] w-[142px]" fill="none" stroke="#1d1d1d" strokeWidth="1.500" aria-hidden="true">
            <path d="M1 7l15-6-2 6 2 5z" fill="#1d1d1d" stroke="none" />
            <path d="M20 11l13-5" stroke="#5a5a5a" strokeWidth="3" />
            <path d="M51 1l6 14-6-3-6 3z" fill="#1d1d1d" stroke="none" />
            <circle cx="75" cy="5" r="4" />
            <path d="M77 8l5 6" strokeWidth="2.500" />
            <path d="M93.500 7.500h10v7h-10zM96 7V4c0-4 6-4 6 0M98.500 10v3" />
            <circle cx="116" cy="8" r="6.500" />
            <circle cx="116" cy="8" r="3" />
            <circle cx="116" cy="8" r="1" />
            <path d="M130 2h11v12h-11zM135.500 5v6M132.500 8h6M130 4h11" />
          </svg>
        </div>
        <div className="flex flex-col pr-[6px] pl-1">
          <div className="mt-[2px] flex h-[20px] items-center gap-[6px] pl-px">
            <Tri />
            Polygon Object [Cube]
          </div>
          <div className="mt-[3px] flex h-[16px] gap-px text-[#c8c8c8]">
            <button type="button" className="w-[41px] rounded-l-[2px] bg-[#8ea6d2] text-[#151515] ring-1 ring-[#303030]">
              Basic
            </button>
            <button type="button" className="w-[42px] bg-[#656565] ring-1 ring-[#303030]">
              Coord.
            </button>
            <button type="button" className="w-[41px] rounded-r-[2px] bg-[#656565] ring-1 ring-[#303030]">
              Phong
            </button>
          </div>
          <h2 className="mt-[7px] h-[15px] bg-[#363636] leading-[15px] font-semibold text-[#c0c0c0]">
            Basic Properties
          </h2>
          <div className="mt-1 flex flex-col">
            <AttrRow label="Name" id="attr-name" dot={false} height="h-[20px]">
              <input id="attr-name" defaultValue="Cube" className={`${field} mr-[2px] flex-1`} />
            </AttrRow>
            <AttrRow label="Layer" id="attr-layer" dot={false} height="h-[20px]">
              <input id="attr-layer" className={`${field} flex-1`} />
              <button type="button" aria-label="Layer menu" className="flex h-[16px] w-[11px] items-center justify-center bg-[#656565]">
                <svg viewBox="0 0 4 6" className="h-[6px] w-1" fill="#ddd">
                  <path d="M0 0l4 3-4 3z" />
                </svg>
              </button>
              <button type="button" aria-label="Pick layer" className="ml-[3px] size-[16px]">
                <svg viewBox="0 0 16 16" className="size-full">
                  <circle cx="8" cy="8" r="7.700" fill="#d0d0d0" />
                  <path d="M3 3l9 3.500-3 1.300 3 3.200-1.300 1.300-3.200-3.200-1.500 2.900z" fill="#141414" />
                </svg>
              </button>
            </AttrRow>
            <AttrRow label="Visible in Editor" id="attr-editor">
              <Select id="attr-editor" value="Default" className="flex-1" />
            </AttrRow>
            <AttrRow label="Visible in Renderer" id="attr-renderer" leader={false}>
              <Select id="attr-renderer" value="Default" className="flex-1" />
            </AttrRow>
            <AttrRow label="Use Color" id="attr-usecolor">
              <Select id="attr-usecolor" value="Off" className="flex-1" />
            </AttrRow>
            <AttrRow label="Display Color" id="attr-color" dim height="h-[18px]">
              <svg viewBox="0 0 4 6" className="-ml-[9px] mr-[5px] h-[6px] w-1" fill="#1b1b1b" aria-hidden="true">
                <path d="M0 0l4 3-4 3z" />
              </svg>
              <button id="attr-color" type="button" aria-label="Display color" className="h-[16px] w-[29px] border border-[#303030] border-r-[#6a6a6a] border-b-[#6a6a6a]" />
            </AttrRow>
            <AttrRow label="X-Ray" id="attr-xray" height="h-[18px]">
              <Check id="attr-xray" />
            </AttrRow>
          </div>
        </div>
      </div>
      <div className="flex w-[20px] shrink-0 flex-col border-l border-[#2c2c2c]">
        <SideTab active className="h-[62px]">Attributes</SideTab>
        <SideTab className="h-[42px]">Layers</SideTab>
      </div>
    </div>
  );
}

function Watermark() {
  return (
    <div className="absolute top-0 right-[15px] flex items-center">
      <span className="pt-px text-[25px] leading-[52px] font-bold text-[#f2f2f2] font-['Open_Sans',sans-serif]">
        <span className="bg-linear-to-b from-[#a8d8ee] from-45% to-[#2a9fd2] to-60% bg-clip-text text-transparent">CG</span>
        Circuit
      </span>
      <svg viewBox="0 0 44 56" className="ml-[9px] h-[56px] w-[44px]" fill="none" strokeWidth="2.600" aria-hidden="true">
        <path d="M8.500 25H15v6l6-6.500 9.700.500V5L2 10.500 2.500 36.500l6 2" stroke="#a4d6ea" />
        <path d="M7.500 23V15.500L42 10v30l-6.500.5-1.500 10.500L24 40l-11-2" stroke="#f0f0f0" />
        <circle cx="7.500" cy="25" r="2.600" stroke="#f0f0f0" strokeWidth="2" />
        <path d="M19 33.500l-6.500 4.500 6 5" stroke="#f0f0f0" />
        <path d="M8.300 38v9l16 2.500" stroke="#2a9fd2" />
        <path d="M20 44.500l6.500 5.200-8 4" stroke="#2a9fd2" />
      </svg>
    </div>
  );
}

export default function App() {
  return (
    <div className="relative flex h-screen w-full overflow-hidden bg-[#484848] font-['Open_Sans','Noto_Sans',sans-serif] text-[11px] leading-[15px] text-[#b9b9b9] select-none">
      <main className="flex min-w-0 flex-1 flex-col">
        <nav className="flex h-[22px] shrink-0 items-center gap-[14px] pb-[2px] pl-2">
          {["File", "Edit", "Create", "Select", "Tools", "Mesh", "Snap", "Animate"].map((t) => (
            <MenuItem key={t}>{t}</MenuItem>
          ))}
        </nav>
        <TopTools />
        <div className="mt-[1px] flex min-h-0 flex-1">
          <LeftTools />
          <Workspace />
        </div>
        <footer className="mt-[2px] flex h-[19px] shrink-0 items-center border-t border-[#6a6a6a] pl-1">
          <Grip />
        </footer>
      </main>

      <aside className="flex w-[311px] shrink-0 flex-col">
        <div className="flex h-[24px] shrink-0 items-start justify-end">
          <label htmlFor="layout" className="mr-[5px] leading-[20px]">
            Layout:
          </label>
          <Select id="layout" value="Startup (User)" className="mr-[7px] w-[138px]" />
          <svg viewBox="0 0 14 16" className="mt-[1px] mr-[1px] h-[16px] w-[14px]" fill="none" stroke="#1d1d1d" aria-hidden="true">
            <circle cx="5" cy="5" r="3.800" strokeWidth="1.500" />
            <path d="M7.500 8.500L13 15" strokeWidth="2.500" />
          </svg>
        </div>
        <ObjectsPanel />
        <AttributesPanel />
      </aside>

      <Watermark />
      <CommandDialog />
    </div>
  );
}
